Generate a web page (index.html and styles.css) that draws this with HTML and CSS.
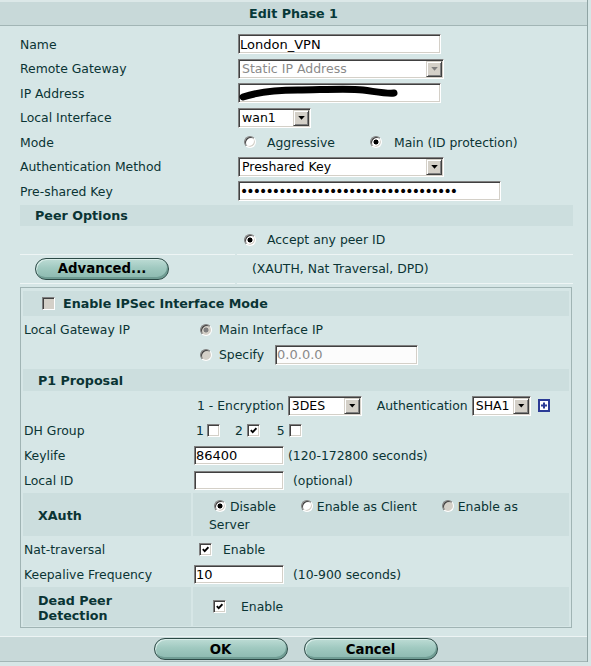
FILE: index.html
```html
<!DOCTYPE html>
<html lang="en">
<head>
    <meta charset="UTF-8">
    <meta name="viewport" content="width=device-width, initial-scale=1.0">
    <title>Edit Phase 1</title>
    <link rel="stylesheet" href="styles.css">
</head>
<body>
<div class="dialog">
    <div class="title">Edit Phase 1</div>

    <div class="content">
        <div class="row">
            <span class="label">Name</span>
            <span class="value"><input class="field w-wide" type="text" value="London_VPN"></span>
        </div>
        <div class="row">
            <span class="label">Remote Gateway</span>
            <span class="value">
                <span class="select w-sel disabled"><select disabled><option>Static IP Address</option></select></span>
            </span>
        </div>
        <div class="row">
            <span class="label">IP Address</span>
            <span class="value">
                <span class="masked">
                    <input class="field w-wide" type="text" value="">
                    <svg class="scribble" width="203" height="20" viewBox="0 0 203 20">
                        <path d="M5 14 C 20 9, 40 7, 60 7 S 110 5, 125 7 S 150 11, 156 10" fill="none" stroke="#000" stroke-width="7" stroke-linecap="round"/>
                    </svg>
                </span>
            </span>
        </div>
        <div class="row">
            <span class="label">Local Interface</span>
            <span class="value">
                <span class="select w-iface"><select><option>wan1</option></select></span>
            </span>
        </div>
        <div class="row">
            <span class="label">Mode</span>
            <span class="value">
                <span class="radio mode-first"></span><span class="opt-text">Aggressive</span>
                <span class="radio checked mode-second"></span><span class="opt-text">Main (ID protection)</span>
            </span>
        </div>
        <div class="row">
            <span class="label">Authentication Method</span>
            <span class="value">
                <span class="select w-sel"><select><option>Preshared Key</option></select></span>
            </span>
        </div>
        <div class="row">
            <span class="label">Pre-shared Key</span>
            <span class="value"><input class="field w-key dots" type="text" value="••••••••••••••••••••••••••••••••••"></span>
        </div>

        <div class="band">Peer Options</div>

        <div class="cells">
            <div></div>
            <div class="accept"><span class="radio checked"></span><span class="opt-text">Accept any peer ID</span></div>
            <div class="adv-cell"><button class="btn btn-adv" type="button">Advanced...</button></div>
            <div class="adv-note">(XAUTH, Nat Traversal, DPD)</div>
        </div>

        <div class="panel">
            <div class="pband ipsec"><span class="check off"></span>Enable IPSec Interface Mode</div>

            <div class="prow first">
                <span class="label">Local Gateway IP</span>
                <span class="value"><span class="radio checked disabled gw"></span><span>Main Interface IP</span></span>
            </div>
            <div class="prow">
                <span class="label"></span>
                <span class="value"><span class="radio disabled gw"></span><span>Specify</span><input class="field w-ip" type="text" value="0.0.0.0" disabled></span>
            </div>

            <div class="pband p1">P1 Proposal</div>

            <div class="prow enc">
                <span class="label"></span>
                <span class="value">
                    <span class="enc-text">1 - Encryption</span>
                    <span class="select w-enc"><select><option>3DES</option></select></span>
                    <span class="auth-text">Authentication</span>
                    <span class="select w-auth"><select><option>SHA1</option></select></span>
                    <svg class="plus" width="12" height="13" viewBox="0 0 12 13">
                        <rect x="0" y="0" width="12" height="13" fill="#2b3b96"/>
                        <rect x="2" y="2" width="8" height="9" fill="#fff"/>
                        <rect x="5" y="3.5" width="2" height="6" fill="#2b3b96"/>
                        <rect x="3" y="5.5" width="6" height="2" fill="#2b3b96"/>
                    </svg>
                </span>
            </div>
            <div class="prow">
                <span class="label">DH Group</span>
                <span class="value dh">
                    <span>1</span><span class="check"></span>
                    <span class="dh-num">2</span><span class="check on"><svg width="7" height="7" viewBox="0 0 7 7"><polyline points="0.8,3.2 2.7,5.2 6.4,1.2" fill="none" stroke="#000" stroke-width="1.8"/></svg></span>
                    <span class="dh-num">5</span><span class="check"></span>
                </span>
            </div>
            <div class="prow">
                <span class="label">Keylife</span>
                <span class="value"><input class="field w-num" type="text" value="86400"><span class="hint near">(120-172800 seconds)</span></span>
            </div>
            <div class="prow short">
                <span class="label">Local ID</span>
                <span class="value"><input class="field w-num" type="text" value=""><span class="hint">(optional)</span></span>
            </div>

            <div class="split xauth">
                <div class="split-label">XAuth</div>
                <div class="split-value">
                    <span class="xopt"><span class="radio checked"></span> Disable</span>
                    <span class="xopt"><span class="radio"></span> Enable as Client</span>
                    <span class="xopt"><span class="radio disabled"></span> <span>Enable as</span></span> <span>Server</span>
                </div>
            </div>

            <div class="prow nat">
                <span class="label">Nat-traversal</span>
                <span class="value"><span class="check on"><svg width="7" height="7" viewBox="0 0 7 7"><polyline points="0.8,3.2 2.7,5.2 6.4,1.2" fill="none" stroke="#000" stroke-width="1.8"/></svg></span><span class="en-text">Enable</span></span>
            </div>
            <div class="prow">
                <span class="label">Keepalive Frequency</span>
                <span class="value"><input class="field w-num" type="text" value="10"><span class="hint">(10-900 seconds)</span></span>
            </div>

            <div class="split dpd">
                <div class="split-label">Dead Peer<br>Detection</div>
                <div class="split-value dpd-value"><span class="check on"><svg width="7" height="7" viewBox="0 0 7 7"><polyline points="0.8,3.2 2.7,5.2 6.4,1.2" fill="none" stroke="#000" stroke-width="1.8"/></svg></span><span class="en-text">Enable</span></div>
            </div>
        </div>
    </div>

    <div class="footer">
        <button class="btn" type="button">OK</button>
        <button class="btn" type="button">Cancel</button>
    </div>
</div>
</body>
</html>
```

FILE: styles.css
```css
body {
    margin: 0;
    background-color: #d6e6e6;
    font-family: "DejaVu Sans", Verdana, sans-serif;
    font-size: 12.4px;
    color: #0a3434;
}

.dialog {
    width: 587px;
    border-right: 1px solid #8fa4a4;
}

.title {
    height: 23px;
    line-height: 23px;
    border-top: 2px solid #dce8e8;
    border-bottom: 1px solid #a2b5b5;
    background-color: #c8d9d9;
    text-align: center;
    font-weight: bold;
    font-size: 12.7px;
    color: #073838;
}

.content {
    padding: 6px 14px 0 20px;
}

.row {
    display: grid;
    grid-template-columns: 218px 1fr;
    align-items: center;
    height: 24.5px;
}

.value {
    display: flex;
    align-items: center;
}

/* text fields */
.field {
    box-sizing: border-box;
    height: 20px;
    margin: 0;
    padding: 0 2px 0 1px;
    border: 1px solid;
    border-color: #808080 #fff #fff #808080;
    box-shadow: inset 1px 1px 0 #404040, inset -1px -1px 0 #d4d0c8;
    background: #fff;
    font-family: "DejaVu Sans", Verdana, sans-serif;
    font-size: 13px;
    color: #000;
    outline: none;
}

.field:disabled {
    color: #8a8a8a;
    background: #fcfcfc;
}

.w-wide { width: 203px; }
.w-key { width: 263px; }
.w-ip { width: 143px; margin-left: 11px; }
.w-num { width: 90px; height: 19px; }

.dots {
    font-size: 14px;
    letter-spacing: -1.9px;
}

.masked {
    position: relative;
    display: inline-block;
    height: 20px;
}

.scribble {
    position: absolute;
    top: 0;
    left: 0;
}

/* drop-down lists */
.select {
    position: relative;
    display: inline-block;
    height: 20px;
}

.select select {
    appearance: none;
    box-sizing: border-box;
    width: 100%;
    height: 20px;
    margin: 0;
    padding: 0 18px 0 3px;
    border: 1px solid;
    border-color: #808080 #fff #fff #808080;
    border-radius: 0;
    box-shadow: inset 1px 1px 0 #404040, inset -1px -1px 0 #d4d0c8;
    background: #fff;
    font-family: "DejaVu Sans", Verdana, sans-serif;
    font-size: 12.5px;
    color: #000;
    opacity: 1;
}

.select::after {
    content: "";
    position: absolute;
    top: 2px;
    right: 2px;
    width: 16px;
    height: 16px;
    box-sizing: border-box;
    background: #d4d0c8;
    border: 1px solid;
    border-color: #d4d0c8 #404040 #404040 #d4d0c8;
    box-shadow: inset 1px 1px 0 #fff, inset -1px -1px 0 #808080;
}

.select::before {
    content: "";
    position: absolute;
    z-index: 1;
    top: 8px;
    right: 6px;
    width: 7px;
    height: 4px;
    background: #000;
    clip-path: polygon(0 0, 100% 0, 50% 100%);
}

.select.disabled select {
    color: #8a8a8a;
}

.select.disabled::before {
    background: #808080;
}

.w-sel { width: 206px; }
.w-iface { width: 73px; }
.w-enc { width: 74px; margin-left: 4px; }
.w-auth { width: 59px; margin-left: 4px; }

/* radio buttons and check boxes */
.radio {
    display: inline-block;
    box-sizing: border-box;
    width: 12px;
    height: 12px;
    border-radius: 50%;
    border: 1px solid;
    border-color: #808080 #fff #fff #808080;
    box-shadow: inset 1px 1px 0 #404040, inset -1px -1px 0 #d4d0c8;
    background: #fff;
    flex-shrink: 0;
}

.radio.checked {
    background: radial-gradient(circle, #000 0 2.2px, #fff 2.8px);
}

.radio.disabled {
    background: #d4d0c8;
}

.radio.checked.disabled {
    background: radial-gradient(circle, #808080 0 2.2px, #d4d0c8 2.8px);
}

.check {
    display: inline-flex;
    align-items: center;
    justify-content: center;
    box-sizing: border-box;
    width: 13px;
    height: 13px;
    border: 1px solid;
    border-color: #808080 #fff #fff #808080;
    box-shadow: inset 1px 1px 0 #404040, inset -1px -1px 0 #d4d0c8;
    background: #fff;
    flex-shrink: 0;
}

.check.off {
    background: #d4d0c8;
}

.mode-first { margin-left: 6px; }
.mode-second { margin-left: 35px; }
.opt-text { margin-left: 11px; }
.mode-second + .opt-text { margin-left: 12px; }

/* peer options */
.band {
    margin-top: 1px;
    height: 21px;
    display: flex;
    align-items: center;
    padding-left: 15px;
    background-color: #ccdede;
    font-weight: bold;
    font-size: 12.7px;
}

.cells {
    display: grid;
    grid-template-columns: 215px 1fr;
    column-gap: 2px;
}

.cells > div {
    height: 28px;
    display: flex;
    align-items: center;
    border-bottom: 1px solid #eef5f5;
}

.accept { padding-left: 7px; }
.adv-cell { padding-left: 15px; }
.adv-note { padding-left: 15px; }

.btn {
    box-sizing: border-box;
    width: 134px;
    height: 22px;
    padding: 0;
    border: 1px solid #2c4a46;
    border-radius: 11px;
    background: linear-gradient(#bddcd5, #a0c9c0 45%, #8bb8ae);
    box-shadow: inset 1px 1px 0 #d8ece8, inset -1px -2px 0 #6f9c93;
    font-family: "DejaVu Sans", Verdana, sans-serif;
    font-weight: bold;
    font-size: 13.3px;
    color: #000;
}

/* advanced panel */
.panel {
    margin: 3.5px 1px 0 0;
    padding: 3px 2px 1px;
    border: 1px solid #a0b4b4;
}

.pband {
    display: flex;
    align-items: center;
    background-color: #ccdede;
    font-weight: bold;
    font-size: 12.7px;
}

.ipsec {
    height: 25px;
    padding-left: 19px;
}

.ipsec .check {
    margin-right: 8px;
}

.p1 {
    margin-top: 2px;
    height: 22px;
    padding-left: 15px;
}

.prow {
    display: grid;
    grid-template-columns: 171px 1fr;
    align-items: center;
    height: 25px;
}

.prow .label {
    padding-left: 1px;
}

.prow.first { margin-top: 1px; }
.prow.enc { margin-top: 2px; }
.prow.short { height: 24px; }
.prow.nat { margin-top: 1px; }

.gw { margin: 0 7px 0 6px; }

.enc-text { margin-left: 3px; }
.auth-text { margin-left: 15px; }
.plus { margin-left: 7px; }

.dh > span:first-child { margin: 0 3px 0 2px; }
.dh-num { margin: 0 4px 0 15px; }
.dh-num + .check + .dh-num { margin-left: 17px; }

.hint { margin-left: 9px; }
.hint.near { margin-left: 4px; }

.nat .check { margin-left: 5px; }
.en-text { margin-left: 11px; }

.split {
    display: grid;
    grid-template-columns: 168px 1fr;
    column-gap: 2px;
}

.split > div {
    background-color: #ccdede;
}

.split-label {
    display: flex;
    align-items: center;
    padding-left: 15px;
    font-weight: bold;
    font-size: 12.7px;
    line-height: 15px;
}

.xauth {
    margin-top: 1px;
    height: 43px;
}

.xauth .split-label {
    padding-top: 2px;
}

.xauth .split-value {
    padding: 5px 35px 0 16px;
    line-height: 18px;
}

.xopt {
    margin-right: 16px;
}

.xopt:last-of-type {
    margin-right: 0;
}

.xopt .radio {
    margin-left: 5px;
    vertical-align: -1px;
}

.dpd {
    height: 39px;
}

.dpd .split-label {
    padding-top: 3px;
}

.dpd-value {
    display: flex;
    align-items: center;
    padding-left: 20px;
}

.dpd-value .en-text { margin-left: 15px; }

/* buttons bar */
.footer {
    margin-top: 8px;
    height: 24px;
    display: flex;
    align-items: center;
    justify-content: center;
    gap: 16px;
    padding-left: 4px;
    border-top: 1px solid #edf4f4;
    border-bottom: 1px solid #a3b6b6;
    background-color: #c8d9d9;
}
```
